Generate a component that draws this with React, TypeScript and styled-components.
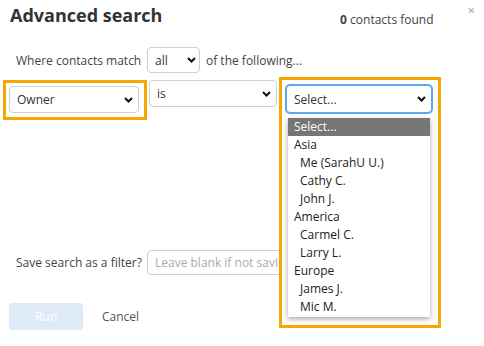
import React from "react";
import styled, { createGlobalStyle } from "styled-components";

const GlobalStyle = createGlobalStyle`
  html, body { margin: 0; padding: 0; background: #fff; }
  body { font-family: "Open Sans", "DejaVu Sans", sans-serif; font-size: 12px; color: #333; }
  * { box-sizing: border-box; }
`;

const Dialog = styled.div`
  width: 484px;
  height: 346px;
  display: flex;
  flex-direction: column;
  overflow: hidden;
`;

const Header = styled.div`
  display: flex;
  align-items: flex-start;
  padding: 3px 0 0 10px;
  height: 27px;
`;

const Title = styled.h1`
  margin: 0;
  font-size: 18px;
  line-height: 24px;
  font-weight: 700;
  color: #333;
  flex: 1;
`;

const Count = styled.div`
  margin-top: 9px;
  font-size: 12px;
  line-height: 16px;
  color: #444;
  b { font-weight: 700; }
`;

const Close = styled.div`
  margin: 1px 9px 0 34px;
  color: #bbb;
  font-size: 13px;
  line-height: 13px;
  font-weight: 700;
`;

const MatchRow = styled.div`
  display: flex;
  align-items: center;
  margin-top: 20px;
  padding-left: 16px;
  height: 26px;
  color: #444;
`;

const Label = styled.span`
  width: 131px;
  flex: none;
`;

const SelectBox = styled.div<{ $w: number; $h?: number; $focus?: boolean }>`
  width: ${(p) => p.$w}px;
  height: ${(p) => p.$h ?? 27}px;
  flex: none;
  display: flex;
  align-items: center;
  justify-content: space-between;
  padding: 0 5px 0 7px;
  border: 1px solid ${(p) => (p.$focus ? "#5ea6f2" : "#cfcfcf")};
  box-shadow: ${(p) => (p.$focus ? "0 0 0 1px #5ea6f2" : "none")};
  border-radius: 4px;
  background: #fff;
  color: #333;
`;

const Chevron = styled.svg`
  width: 9px;
  height: 6px;
  flex: none;
`;

const After = styled.span`
  margin-left: 6px;
`;

const CriteriaRow = styled.div`
  display: flex;
  align-items: flex-start;
  margin-top: 7px;
  padding-left: 3px;
  gap: 2px;
`;

const Highlight = styled.div`
  border: 3px solid #f5a800;
  padding: 3px 5px 4px 3px;
  background: #fff;
`;

const OverlayCell = styled.div`
  position: relative;
  width: 162px;
  height: 41px;
`;

const OverlayBox = styled(Highlight)`
  position: absolute;
  top: -3px;
  left: 0;
  width: 162px;
  height: 251px;
  padding: 5px 6px 0 4px;
  z-index: 2;
`;

const ListBox = styled.div`
  margin: 5px 0 0 2px;
  width: 142px;
  padding-bottom: 1px;
  background: #fff;
  box-shadow: 0 2px 5px rgba(0, 0, 0, 0.35);
`;

const Item = styled.div<{ $kind: "selected" | "group" | "option" }>`
  height: 18px;
  line-height: 18px;
  padding-left: ${(p) => (p.$kind === "option" ? 12 : 6)}px;
  background: ${(p) => (p.$kind === "selected" ? "#767676" : "transparent")};
  color: ${(p) => (p.$kind === "selected" ? "#fff" : "#222")};
  white-space: nowrap;
`;

const SaveRow = styled.div`
  display: flex;
  align-items: center;
  margin-top: 129px;
  padding-left: 16px;
  height: 25px;
  color: #444;
`;

const TextInput = styled.div`
  width: 270px;
  height: 25px;
  border: 1px solid #cfcfcf;
  border-radius: 4px;
  padding-left: 7px;
  display: flex;
  align-items: center;
  color: #aaa;
  white-space: nowrap;
`;

const ButtonRow = styled.div`
  display: flex;
  align-items: center;
  margin-top: 28px;
  padding-left: 9px;
  gap: 19px;
`;

const RunButton = styled.div`
  width: 74px;
  height: 27px;
  border-radius: 3px;
  background: #dfeaf8;
  color: #fff;
  display: flex;
  align-items: center;
  justify-content: center;
`;

const Cancel = styled.span`
  color: #555;
`;

const Chev = () => (
  <Chevron viewBox="0 0 9 6">
    <polyline points="1,1 4.5,4.5 8,1" fill="none" stroke="#111" strokeWidth="2" />
  </Chevron>
);

const items: { t: string; k: "selected" | "group" | "option" }[] = [
  { t: "Select...", k: "selected" },
  { t: "Asia", k: "group" },
  { t: "Me (SarahU U.)", k: "option" },
  { t: "Cathy C.", k: "option" },
  { t: "John J.", k: "option" },
  { t: "America", k: "group" },
  { t: "Carmel C.", k: "option" },
  { t: "Larry L.", k: "option" },
  { t: "Europe", k: "group" },
  { t: "James J.", k: "option" },
  { t: "Mic M.", k: "option" },
];

export default function App() {
  return (
    <Dialog>
      <GlobalStyle />
      <Header>
        <Title>Advanced search</Title>
        <Count>
          <b>0</b> contacts found
        </Count>
        <Close>×</Close>
      </Header>
      <MatchRow>
        <Label>Where contacts match</Label>
        <SelectBox $w={53} $h={26} style={{ paddingRight: 3 }}>
          all <Chev />
        </SelectBox>
        <After>of the following...</After>
      </MatchRow>
      <CriteriaRow>
        <Highlight>
          <SelectBox $w={130}>
            Owner <Chev />
          </SelectBox>
        </Highlight>
        <SelectBox $w={128}>
          is <Chev />
        </SelectBox>
        <OverlayCell>
          <OverlayBox>
            <SelectBox $w={146} $h={28} $focus>
              Select... <Chev />
            </SelectBox>
            <ListBox>
              {items.map((it) => (
                <Item key={it.t} $kind={it.k}>
                  {it.t}
                </Item>
              ))}
            </ListBox>
          </OverlayBox>
        </OverlayCell>
      </CriteriaRow>
      <SaveRow>
        <Label>Save search as a filter?</Label>
        <TextInput>Leave blank if not saving</TextInput>
      </SaveRow>
      <ButtonRow>
        <RunButton>Run</RunButton>
        <Cancel>Cancel</Cancel>
      </ButtonRow>
    </Dialog>
  );
}
